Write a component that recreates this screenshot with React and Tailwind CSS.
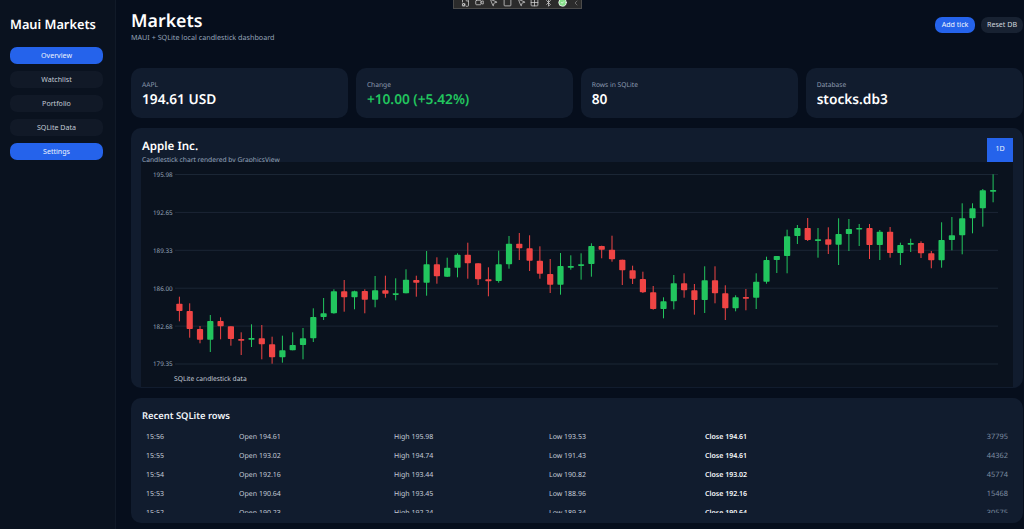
import { Video, MousePointer2, Square, Grid2x2, Bluetooth, CircleCheck, ChevronLeft, FileCog } from 'lucide-react';

const nav = [
  { label: 'Overview', active: true },
  { label: 'Watchlist' },
  { label: 'Portfolio' },
  { label: 'SQLite Data' },
  { label: 'Settings', active: true },
];

const stats = [
  { label: 'AAPL', value: '194.61 USD' },
  { label: 'Change', value: '+10.00 (+5.42%)', green: true },
  { label: 'Rows in SQLite', value: '80' },
  { label: 'Database', value: 'stocks.db3' },
];

const rows = [
  ['15:56', '194.61', '195.98', '193.53', '194.61', '37795'],
  ['15:55', '193.02', '194.74', '191.43', '194.61', '44362'],
  ['15:54', '192.16', '193.44', '190.82', '193.02', '45774'],
  ['15:53', '190.64', '193.45', '188.96', '192.16', '15468'],
  ['15:52', '190.23', '192.24', '189.34', '190.64', '30575'],
];

const axis = [
  ['195.98', 174.5],
  ['192.65', 212.4],
  ['189.33', 250.3],
  ['186.00', 288.2],
  ['182.68', 326.1],
  ['179.35', 364],
];

// high y, low y, body top, body bottom, colour (r / g)
const candles = [
  [296.7, 321.3, 303.7, 311, 'r'], [303.3, 337.7, 311, 329, 'r'], [326, 343.3, 329, 339.7, 'r'], [315, 352, 321, 339.7, 'g'],
  [317.3, 339.3, 321, 326.3, 'r'], [326.3, 345.7, 326.3, 339, 'r'], [332.3, 355, 339, 340.7, 'r'], [324.3, 347, 338, 339.7, 'g'],
  [325, 359.3, 338.3, 344.3, 'r'], [336.7, 363.7, 344.3, 357.3, 'r'], [335.7, 362.7, 350.3, 357.3, 'g'], [332.3, 350.3, 345, 350.3, 'g'],
  [328, 359.3, 338.3, 345, 'g'], [308.3, 342, 317, 338.3, 'g'], [298, 320, 313.3, 317, 'g'], [289.3, 313.7, 291.3, 313.3, 'g'],
  [280, 311.7, 291.3, 297.3, 'r'], [290.7, 309.3, 291.3, 297.3, 'g'], [289.3, 313.3, 291, 299.7, 'r'], [276, 307.3, 290.3, 299.7, 'g'],
  [275.7, 297.7, 290.3, 293.7, 'r'], [278.3, 300.3, 293.3, 294.7, 'g'], [269.3, 293.3, 279.7, 293.3, 'g'], [275.7, 296.7, 280, 282.7, 'r'],
  [251, 295.7, 264.3, 282.7, 'g'], [257.3, 283.7, 264.3, 276.3, 'r'], [257.7, 277, 267.7, 276.7, 'g'], [253.3, 277.3, 254.7, 267.7, 'g'],
  [242.7, 278.7, 254.7, 263.3, 'r'], [263.3, 285, 263.3, 279.3, 'r'], [267.3, 296.3, 279.3, 281.3, 'r'], [250.7, 282.7, 264.3, 281, 'g'],
  [236, 268.7, 243.7, 264.3, 'g'], [233, 260, 243.7, 248.3, 'r'], [235.3, 271, 248.3, 260.7, 'r'], [246.3, 278.7, 260.7, 273.7, 'r'],
  [259, 293, 274, 284.7, 'r'], [253, 294.7, 266, 284.7, 'g'], [255.3, 269.7, 266, 267.7, 'g'], [253.3, 279.7, 264.3, 265.7, 'g'],
  [243.3, 276.7, 246, 264, 'g'], [245.7, 258.3, 246, 249.7, 'r'], [235.7, 261.7, 249.7, 259.3, 'r'], [259.7, 285, 259.7, 270.3, 'r'],
  [265.7, 284, 270.3, 278.7, 'r'], [271.7, 293, 279, 292.3, 'r'], [286, 309.7, 292.3, 309, 'r'], [297.3, 318.3, 301.3, 309, 'g'],
  [275, 309.3, 283.3, 301.3, 'g'], [273.3, 297.7, 283.3, 290.3, 'r'], [284, 314.7, 290.3, 300, 'r'], [266.3, 313, 280.3, 300, 'g'],
  [266.3, 303.3, 280.3, 293.3, 'r'], [285.3, 320, 293.3, 308.3, 'r'], [295.3, 311.3, 297.3, 308.3, 'g'], [289, 310.3, 297, 298.7, 'r'],
  [273.3, 309, 281.7, 297.7, 'g'], [256.7, 283.7, 260, 281.7, 'g'], [256, 273, 256, 260, 'g'], [229.7, 273.3, 236.3, 256, 'g'],
  [225, 244, 228, 236, 'g'], [218, 241, 228, 240, 'r'], [228, 257.7, 239.3, 241, 'g'], [227.3, 254, 239.3, 244.7, 'r'],
  [218.3, 265, 234, 244.7, 'g'], [219, 251, 229, 234, 'g'], [224, 246, 228, 229.3, 'g'], [224, 259, 228, 245, 'r'],
  [230, 260, 231.7, 245, 'g'], [227, 257.7, 231.7, 253, 'r'], [242.7, 265, 245, 253, 'g'], [238.7, 252, 243, 244.7, 'g'],
  [241.3, 258, 243, 253.3, 'r'], [251, 268.3, 253.3, 260.3, 'r'], [222.3, 267.7, 240, 260.3, 'g'], [217, 250.3, 235.3, 240, 'g'],
  [203.3, 254.3, 218.3, 235.3, 'g'], [203.3, 233.3, 208.3, 218.3, 'g'], [189, 226.7, 190.3, 208.3, 'g'], [174.3, 202.3, 190, 191.7, 'g'],
];

const CandleChart = () => (
  <svg viewBox="141 162 872 225" className="block w-full h-full">
    {axis.map(([label, y]) => (
      <g key={label}>
        <line x1="175" x2="998" y1={y} y2={y} stroke="#1b2635" strokeWidth="1" />
        <text x="153" y={y + 2.4} fontSize="6.3" fill="#94a3b8">{label}</text>
      </g>
    ))}
    {candles.map(([high, low, top, bottom, c], i) => {
      const x = 179.4 + i * 10.3;
      const color = c === 'g' ? '#22c55e' : '#ef4444';
      return (
        <g key={i}>
          <line x1={x} x2={x} y1={high} y2={low} stroke={color} strokeWidth="1" />
          <rect x={x - 3.1} y={top} width="6.2" height={Math.max(bottom - top, 1.6)} rx="0.8" fill={color} />
        </g>
      );
    })}
    <text x="174" y="380.5" fontSize="6.7" fill="#c2cad6">SQLite candlestick data</text>
  </svg>
);

const Toolbar = () => (
  <div className="absolute left-[453px] top-0 flex h-[9px] w-[129px] items-end justify-between overflow-hidden border border-t-0 border-[#4b4b4b] bg-[#2b2b2b] pb-[1px] pl-[7px] pr-[1px] text-[#d4d4d4]">
    <FileCog size={9} />
    <Video size={9} />
    <MousePointer2 size={9} />
    <Square size={9} />
    <MousePointer2 size={9} />
    <Grid2x2 size={9} />
    <Bluetooth size={9} />
    <CircleCheck size={9} fill="#86e08a" className="text-white" />
    <ChevronLeft size={8} className="text-[#8a8a8a]" />
  </div>
);

export default function App() {
  return (
    <div className="relative flex h-screen overflow-hidden bg-[#060e1c] font-['Noto_Sans',sans-serif] text-white antialiased [text-rendering:geometricPrecision]">
      <aside className="w-[116px] shrink-0 border-r border-[#111a28] bg-[#0a121f] pl-[10px] pr-[12px] pt-[15px]">
        <h1 className="whitespace-nowrap text-[12.8px] font-semibold leading-[18px]">Maui Markets</h1>
        <nav className="mt-[14px] flex flex-col gap-[7.5px]">
          {nav.map((item) => (
            <button
              key={item.label}
              className={`h-[16.5px] rounded-[7px] text-[7.1px] leading-none ${item.active ? 'bg-[#2563eb] text-[#eef3fd]' : 'bg-[#111927] text-[#c2cad6]'}`}
            >
              {item.label}
            </button>
          ))}
        </nav>
      </aside>

      <main className="min-w-0 flex-1 pl-[15px] pr-[1px]">
        <header className="flex h-[68px] items-start justify-between pt-[9px]">
          <div>
            <h2 className="text-[17.8px] font-semibold leading-[24px]">Markets</h2>
            <p className="mt-[-1px] text-[7.2px] leading-[12px] text-[#94a3b8]">MAUI + SQLite local candlestick dashboard</p>
          </div>
          <div className="mt-[8px] flex gap-[6px]">
            <button className="h-[16px] w-[40px] rounded-[7px] bg-[#2563eb] text-[7.1px] leading-none text-[#eef3fd]">Add tick</button>
            <button className="h-[16px] w-[42px] rounded-[7px] bg-[#182232] text-[7.1px] leading-none text-[#d0d6df]">Reset DB</button>
          </div>
        </header>

        <section className="grid h-[50px] grid-cols-4 gap-[7.5px]">
          {stats.map((s) => (
            <div key={s.label} className="rounded-[10px] bg-[#111c2e] pl-[11px] pt-[11px]">
              <p className="text-[6.7px] leading-[11px] text-[#8c9aae]">{s.label}</p>
              <p className={`text-[13.7px] font-semibold leading-[19px] ${s.green ? 'text-[#22c55e]' : 'text-white'}`}>{s.value}</p>
            </div>
          ))}
        </section>

        <section className="mt-[10px] h-[260px] overflow-hidden rounded-[10px] bg-[#111c2e] pl-[10px] pr-[10px] pt-[10px]">
          <div className="flex h-[24px] justify-between">
            <div className="overflow-hidden pl-[1px] pt-[1px]">
              <h3 className="text-[11.6px] font-semibold leading-[15px]">Apple Inc.</h3>
              <p className="text-[6.7px] leading-[11px] text-[#94a3b8]">Candlestick chart rendered by GraphicsView</p>
            </div>
            <button className="h-[24px] w-[26px] bg-[#2563eb] pb-[3px] text-[7.1px] leading-none text-[#eef3fd]">1D</button>
          </div>
          <div className="h-[225px] bg-[#0a121e]">
            <CandleChart />
          </div>
        </section>

        <section className="mt-[10px] h-[125px] rounded-[10px] bg-[#111c2e] px-[11px] pt-[11px]">
          <h3 className="text-[9.4px] font-semibold leading-[13px] text-[#f1f5f9]">Recent SQLite rows</h3>
          <div className="mt-[6.5px] h-[84.5px] overflow-hidden">
            {rows.map((r) => (
              <div key={r[0]} className="grid h-[19px] grid-cols-[93px_155px_155px_156px_1fr] items-center pl-[4px] pr-[4px] text-[7px] text-[#c2cad6]">
                <span>{r[0]}</span>
                <span>Open {r[1]}</span>
                <span>High {r[2]}</span>
                <span>Low {r[3]}</span>
                <span className="flex items-center justify-between">
                  <b className="font-semibold text-[#f8fafc]">Close {r[4]}</b>
                  <span className="text-[7.4px] text-[#7f8ea3]">{r[5]}</span>
                </span>
              </div>
            ))}
          </div>
        </section>
      </main>

      <Toolbar />
    </div>
  );
}
